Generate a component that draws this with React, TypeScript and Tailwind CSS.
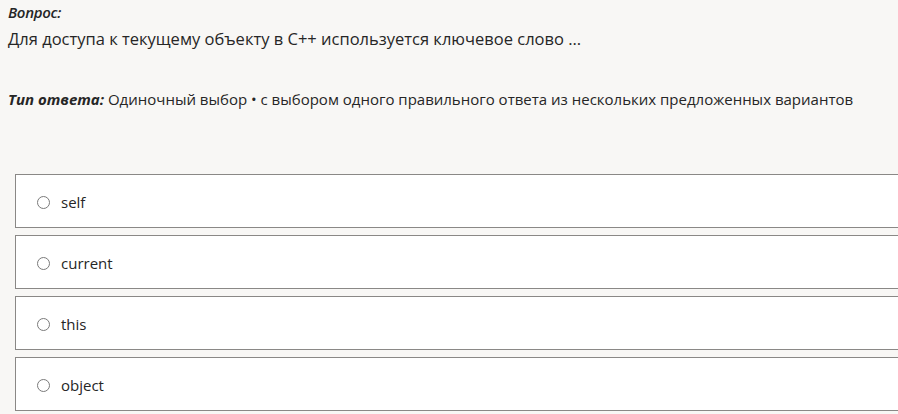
const options = ["self", "current", "this", "object"];

export default function App() {
  return (
    <div className="min-h-[414px] w-[898px] overflow-hidden bg-[#f8f7f5] font-['Open_Sans',sans-serif] text-[#262626]">
      <div className="px-2 pt-[2px]">
        <div className="text-[15px] font-semibold italic leading-[20px] tracking-[-0.3px]">Вопрос:</div>
        <div className="mt-[6px] text-[16.5px] leading-[22px]">
          Для доступа к текущему объекту в C++ используется ключевое слово ...
        </div>
        <div className="mt-[38px] text-[15px] leading-[22px]">
          <span className="font-bold italic">Тип ответа:</span> Одиночный выбор • с
          выбором одного правильного ответа из нескольких предложенных вариантов
        </div>
      </div>

      <div className="mt-[64px] flex flex-col gap-[7px] pl-[15px]">
        {options.map((opt) => (
          <label
            key={opt}
            className="flex h-[54px] w-[900px] items-center border border-[#8a8886] border-r-0 bg-white pl-[21px] pt-[3px]"
          >
            <span className="h-[13px] w-[13px] rounded-full border border-[#7a7a7a] bg-white" />
            <span className="ml-[11px] text-[15px]">{opt}</span>
          </label>
        ))}
      </div>
    </div>
  );
}
